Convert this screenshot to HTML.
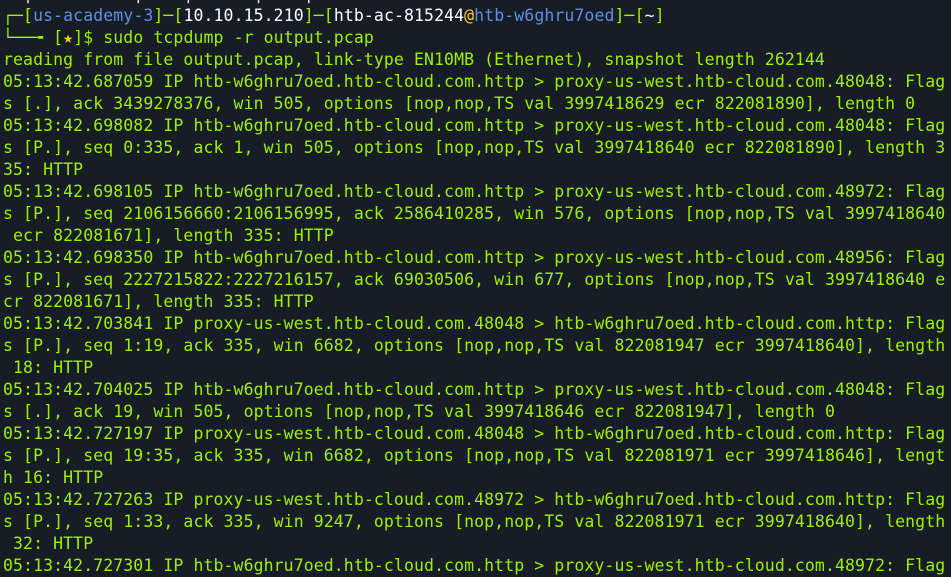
<!DOCTYPE html>
<html><head><meta charset="utf-8"><style>
html,body{margin:0;padding:0;background:#161d27;width:951px;height:559px;overflow:hidden}
pre{margin:0;position:absolute;left:3px;top:-17px;font-family:"DejaVu Sans Mono","Liberation Mono",monospace;font-size:16.5px;letter-spacing:0.09px;line-height:22px;color:#9fef00;white-space:pre}
.b{color:#5f8fdf}.w{color:#ffffff}.y{color:#ffcc33}
</style></head><body><pre>  <span class="w">│</span>          <span class="w">│</span>    <span class="w">│</span>      <span class="w">│</span>    <span class="w">│</span>
┌─[<span class="b">us-academy-3</span>]─[<span class="w">10.10.15.210</span>]─[<span class="w">htb-ac-815244</span><span class="y">@</span><span class="b">htb-w6ghru7oed</span>]─[<span class="w">~</span>]
└──╼ [<span class="y">★</span>]$ sudo tcpdump -r output.pcap
reading from file output.pcap, link-type EN10MB (Ethernet), snapshot length 262144
05:13:42.687059 IP htb-w6ghru7oed.htb-cloud.com.http &gt; proxy-us-west.htb-cloud.com.48048: Flag
s [.], ack 3439278376, win 505, options [nop,nop,TS val 3997418629 ecr 822081890], length 0
05:13:42.698082 IP htb-w6ghru7oed.htb-cloud.com.http &gt; proxy-us-west.htb-cloud.com.48048: Flag
s [P.], seq 0:335, ack 1, win 505, options [nop,nop,TS val 3997418640 ecr 822081890], length 3
35: HTTP
05:13:42.698105 IP htb-w6ghru7oed.htb-cloud.com.http &gt; proxy-us-west.htb-cloud.com.48972: Flag
s [P.], seq 2106156660:2106156995, ack 2586410285, win 576, options [nop,nop,TS val 3997418640
 ecr 822081671], length 335: HTTP
05:13:42.698350 IP htb-w6ghru7oed.htb-cloud.com.http &gt; proxy-us-west.htb-cloud.com.48956: Flag
s [P.], seq 2227215822:2227216157, ack 69030506, win 677, options [nop,nop,TS val 3997418640 e
cr 822081671], length 335: HTTP
05:13:42.703841 IP proxy-us-west.htb-cloud.com.48048 &gt; htb-w6ghru7oed.htb-cloud.com.http: Flag
s [P.], seq 1:19, ack 335, win 6682, options [nop,nop,TS val 822081947 ecr 3997418640], length
 18: HTTP
05:13:42.704025 IP htb-w6ghru7oed.htb-cloud.com.http &gt; proxy-us-west.htb-cloud.com.48048: Flag
s [.], ack 19, win 505, options [nop,nop,TS val 3997418646 ecr 822081947], length 0
05:13:42.727197 IP proxy-us-west.htb-cloud.com.48048 &gt; htb-w6ghru7oed.htb-cloud.com.http: Flag
s [P.], seq 19:35, ack 335, win 6682, options [nop,nop,TS val 822081971 ecr 3997418646], lengt
h 16: HTTP
05:13:42.727263 IP proxy-us-west.htb-cloud.com.48972 &gt; htb-w6ghru7oed.htb-cloud.com.http: Flag
s [P.], seq 1:33, ack 335, win 9247, options [nop,nop,TS val 822081971 ecr 3997418640], length
 32: HTTP
05:13:42.727301 IP htb-w6ghru7oed.htb-cloud.com.http &gt; proxy-us-west.htb-cloud.com.48972: Flag
</pre></body></html>
